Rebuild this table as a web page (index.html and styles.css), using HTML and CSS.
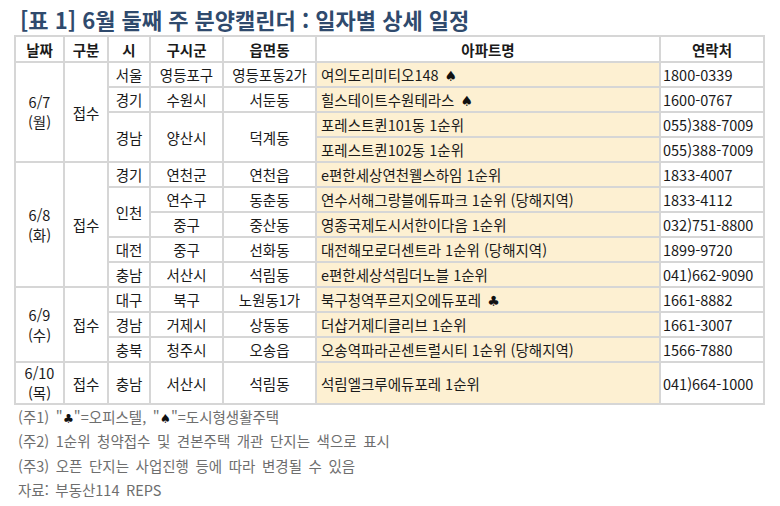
FILE: index.html
```html
<!DOCTYPE html>
<html lang="ko">
<head>
<meta charset="utf-8">
<link rel="stylesheet" href="styles.css">
</head>
<body>
<div class="page">
  <h1 class="title">[표 1] 6월 둘째 주 분양캘린더 : 일자별 상세 일정</h1>
  <table class="cal">
    <colgroup>
      <col class="c-date"><col class="c-type"><col class="c-si"><col class="c-gu"><col class="c-dong"><col class="c-apt"><col class="c-tel">
    </colgroup>
    <thead>
      <tr><th>날짜</th><th>구분</th><th>시</th><th>구시군</th><th>읍면동</th><th>아파트명</th><th>연락처</th></tr>
    </thead>
    <tbody>
      <tr><td rowspan="4" class="date">6/7<br>(월)</td><td rowspan="4">접수</td><td>서울</td><td>영등포구</td><td>영등포동2가</td><td class="apt">여의도리미티오148 <span class="sym">♠</span></td><td class="tel">1800-0339</td></tr>
      <tr><td>경기</td><td>수원시</td><td>서둔동</td><td class="apt">힐스테이트수원테라스 <span class="sym">♠</span></td><td class="tel">1600-0767</td></tr>
      <tr><td rowspan="2">경남</td><td rowspan="2">양산시</td><td rowspan="2">덕계동</td><td class="apt">포레스트퀸101동 1순위</td><td class="tel">055)388-7009</td></tr>
      <tr><td class="apt">포레스트퀸102동 1순위</td><td class="tel">055)388-7009</td></tr>

      <tr><td rowspan="5" class="date">6/8<br>(화)</td><td rowspan="5">접수</td><td>경기</td><td>연천군</td><td>연천읍</td><td class="apt">e편한세상연천웰스하임 1순위</td><td class="tel">1833-4007</td></tr>
      <tr><td rowspan="2">인천</td><td>연수구</td><td>동춘동</td><td class="apt">연수서해그랑블에듀파크 1순위 (당해지역)</td><td class="tel">1833-4112</td></tr>
      <tr><td>중구</td><td>중산동</td><td class="apt">영종국제도시서한이다음 1순위</td><td class="tel">032)751-8800</td></tr>
      <tr><td>대전</td><td>중구</td><td>선화동</td><td class="apt">대전해모로더센트라 1순위 (당해지역)</td><td class="tel">1899-9720</td></tr>
      <tr><td>충남</td><td>서산시</td><td>석림동</td><td class="apt">e편한세상석림더노블 1순위</td><td class="tel">041)662-9090</td></tr>

      <tr><td rowspan="3" class="date">6/9<br>(수)</td><td rowspan="3">접수</td><td>대구</td><td>북구</td><td>노원동1가</td><td class="apt">북구청역푸르지오에듀포레 <span class="sym">♣</span></td><td class="tel">1661-8882</td></tr>
      <tr><td>경남</td><td>거제시</td><td>상동동</td><td class="apt">더샵거제디클리브 1순위</td><td class="tel">1661-3007</td></tr>
      <tr><td>충북</td><td>청주시</td><td>오송읍</td><td class="apt">오송역파라곤센트럴시티 1순위 (당해지역)</td><td class="tel">1566-7880</td></tr>

      <tr class="last"><td class="date">6/10<br>(목)</td><td>접수</td><td>충남</td><td>서산시</td><td>석림동</td><td class="apt">석림엘크루에듀포레 1순위</td><td class="tel">041)664-1000</td></tr>
    </tbody>
  </table>
  <div class="notes">
    <p>(주1) "<span class="sym">♣</span>"=오피스텔, "<span class="sym">♠</span>"=도시형생활주택</p>
    <p>(주2) 1순위 청약접수 및 견본주택 개관 단지는 색으로 표시</p>
    <p>(주3) 오픈 단지는 사업진행 등에 따라 변경될 수 있음</p>
    <p>자료: 부동산114 REPS</p>
  </div>
</div>
</body>
</html>
```

FILE: styles.css
```css
html, body {
  margin: 0;
  padding: 0;
  background: #ffffff;
}
body {
  font-family: "Noto Sans CJK KR", "Noto Sans", sans-serif;
  color: #1a1a1a;
}
.page {
  padding: 4px 0 0 14px;
}
.title {
  margin: 0 0 0 6px;
  font-size: 22px;
  line-height: 30px;
  font-weight: 700;
  color: #2f4a6d;
  height: 31px;
}
.cal {
  border-collapse: collapse;
  table-layout: fixed;
  width: 751px;
  font-size: 14.5px;
  border: 2px solid #d6d6d6;
}
.cal th, .cal td {
  border: 2px solid #d6d6d6;
  line-height: 21px;
  padding: 1px 3px;
  text-align: center;
  vertical-align: middle;
  white-space: nowrap;
  overflow: hidden;
}
.cal th {
  font-weight: 700;
  padding: 1.5px 3px;
  background: #ffffff;
}
.c-date { width: 49px; }
.c-type { width: 44px; }
.c-si { width: 42px; }
.c-gu { width: 73px; }
.c-dong { width: 93px; }
.c-apt { width: 344px; }
.c-tel { width: 104px; }
.cal td.date {
  line-height: 20px;
}
.cal td.apt {
  background: #fdf0d2;
  text-align: left;
  padding-left: 4px;
}
.cal td.tel {
  text-align: left;
  padding-left: 2px;
}
.cal tr.last td {
  padding-top: 0;
  padding-bottom: 0;
}
.sym {
  font-family: "DejaVu Sans", sans-serif;
  color: #111111;
  font-size: 14px;
  line-height: 1;
}
.apt .sym {
  margin-left: 2px;
}
.notes {
  padding-left: 4px;
  font-size: 14.5px;
  color: #6e6e6e;
  word-spacing: 2.5px;
}
.notes p {
  margin: 0;
  height: 24.3px;
  line-height: 24px;
  white-space: nowrap;
}
.notes .sym {
  font-size: 12.5px;
}
```
